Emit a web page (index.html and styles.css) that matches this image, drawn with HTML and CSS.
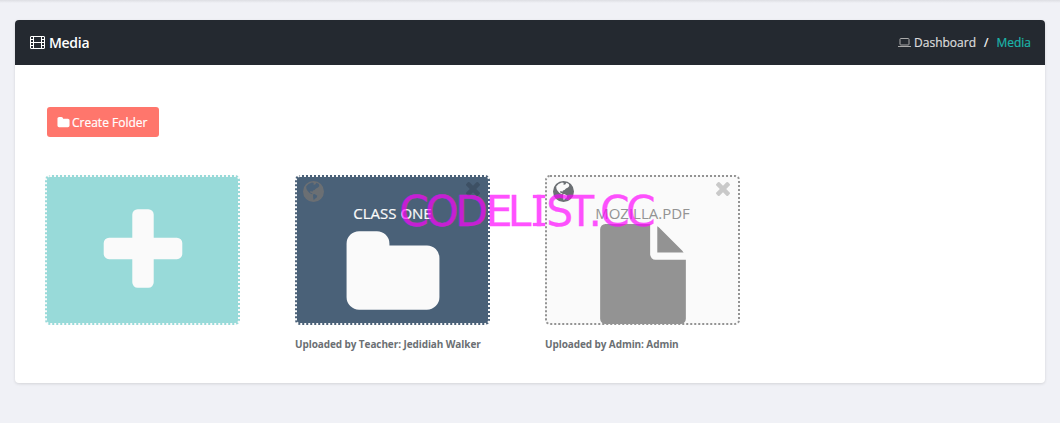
FILE: index.html
```html
<!DOCTYPE html>
<html lang="en">
<head>
<meta charset="utf-8">
<title>Media</title>
<link rel="stylesheet" href="styles.css">
</head>
<body>
<svg class="defs" aria-hidden="true">
  <symbol id="folder" viewBox="0 0 1792 1792"><path d="M1728 608v704q0 92-66 158t-158 66h-1216q-92 0-158-66t-66-158v-960q0-92 66-158t158-66h320q92 0 158 66t66 158v32h672q92 0 158 66t66 158z"/></symbol>
  <symbol id="times" viewBox="302 366 1188 1188"><path d="M1490 1322q0 40-28 68l-136 136q-28 28-68 28t-68-28l-294-294-294 294q-28 28-68 28t-68-28l-136-136q-28-28-28-68t28-68l294-294-294-294q-28-28-28-68t28-68l136-136q28-28 68-28t68 28l294 294 294-294q28-28 68-28t68 28l136 136q28 28 28 68t-28 68l-294 294 294 294q28 28 28 68z"/></symbol>
  <symbol id="globe" viewBox="0 0 21 21"><path fill-rule="evenodd" d="M10.500 0a10.500 10.500 0 1 0 0 21a10.500 10.500 0 1 0 0-21zM3.200 5.500L5.500 3L9 1.500L11 2L10 3.300L12 3.800L13.500 1.800L15.800 3L16.300 5L15 6.500L13 7.500L11.500 9L10 9.500L9.300 10.800L7.800 10L6.800 11L8 12L9.500 12.500L9 13.300L6.500 12L4.500 9.800L3.500 8zM10 13.500L11.500 13L14.300 14.800L13.500 16.800L12 17.800L10.800 19.200L10.200 17z"/></symbol>
</svg>
<div class="topline"></div>
<main class="panel">
  <header class="panel-head">
    <h1 class="title">
      <svg class="film" viewBox="0 0 15 13" fill="none" stroke="currentColor"><rect x=".5" y=".5" width="14" height="12" rx=".5"/><path d="M3.500.5v12M11.500.5v12M3.500 6.500h8M.5 3.500h3M.5 6.500h3M.5 9.500h3M11.500 3.500h3M11.500 6.500h3M11.500 9.500h3"/></svg>
      <span>Media</span>
    </h1>
    <nav class="crumbs">
      <svg class="laptop" viewBox="0 0 13 9" fill="none" stroke="currentColor"><rect x="2" y=".5" width="9" height="6.500" rx=".8"/><path d="M0 8.500h13"/></svg>
      <span class="home">Dashboard</span><span class="slash">/</span><span class="current">Media</span>
    </nav>
  </header>
  <section class="content">
    <button class="create"><svg class="mini"><use href="#folder"/></svg><span>Create Folder</span></button>
    <div class="items">
      <div class="tile add">
        <svg class="big" viewBox="0 0 1792 1792"><path d="M1600 736v192q0 40-28 68t-68 28h-416v416q0 40-28 68t-68 28h-192q-40 0-68-28t-28-68v-416h-416q-40 0-68-28t-28-68v-192q0-40 28-68t68-28h416v-416q0-40 28-68t68-28h192q40 0 68 28t28 68v416h416q40 0 68 28t28 68z"/></svg>
      </div>
      <div class="item">
        <div class="tile class-folder">
          <div class="actions"><svg class="globe"><use href="#globe"/></svg><svg class="close"><use href="#times"/></svg></div>
          <span class="name">CLASS ONE</span>
          <svg class="big"><use href="#folder"/></svg>
        </div>
        <p class="by">Uploaded by Teacher: Jedidiah Walker</p>
      </div>
      <div class="item">
        <div class="tile file">
          <div class="actions"><svg class="globe"><use href="#globe"/></svg><svg class="close"><use href="#times"/></svg></div>
          <span class="name">MOZILLA.PDF</span>
          <svg class="big" viewBox="0 0 1792 1792"><path d="M1152 512v-472q22 14 36 28l408 408q14 14 28 36h-472zm-128 32q0 40 28 68t68 28h544v1056q0 40-28 68t-68 28h-1344q-40 0-68-28t-28-68v-1600q0-40 28-68t68-28h800v544z"/></svg>
        </div>
        <p class="by">Uploaded by Admin: Admin</p>
      </div>
    </div>
  </section>
</main>
<svg class="watermark" viewBox="0 0 260 50">
  <text y="41" x="-.7 25.300 55.300 85.800 107.800 132.700 146.200 168.300 188.600 200 226">CODELIST.CC</text>
  <path d="M133 10h12v3h-12zM133 38h12v3h-12z"/>
</svg>
</body>
</html>
```
FILE: styles.css
```css
* { box-sizing: border-box; }
body {
  margin: 0;
  height: 423px;
  overflow: hidden;
  background: #f0f1f6;
  font-family: "Open Sans", "Noto Sans", sans-serif;
}
.defs { display: none; }
.topline { height: 3px; background: linear-gradient(#dddee3, #f0f1f6); }
.panel {
  margin: 17px 15px 0;
  height: 363px;
  background: #fff;
  border-radius: 4px;
  box-shadow: 0 1px 3px rgba(0, 0, 0, .12);
}
.panel-head {
  height: 45px;
  padding: 0 14px 0 15px;
  display: flex;
  justify-content: space-between;
  align-items: center;
  background: #242930;
  border-radius: 4px 4px 0 0;
  color: #fff;
}
.title {
  margin: 0;
  display: flex;
  align-items: center;
  gap: 4px;
  font-size: 14px;
  font-weight: 600;
  letter-spacing: -.3px;
}
.film { width: 15px; height: 13px; }
.crumbs {
  display: flex;
  align-items: center;
  font-size: 12px;
  color: #dcdcdc;
  -webkit-text-stroke: .2px currentColor;
}
.laptop { width: 13px; height: 9px; margin-right: 3px; color: #aaa; }
.slash { margin: 0 8px; color: #fff; }
.current { color: #1bb5ab; }
.content { padding: 42px 30px 0; }
.create {
  display: flex;
  align-items: center;
  gap: 2px;
  width: 112px;
  height: 30px;
  margin: 0 0 38px 2px;
  padding: 0 10px;
  border: 0;
  border-radius: 3px;
  background: #ff766c;
  color: #fff;
  font: 12px "Open Sans", "Noto Sans", sans-serif;
  -webkit-text-stroke: .2px currentColor;
  white-space: nowrap;
}
.mini { width: 13px; height: 13px; fill: #fff; flex: none; }
.items { display: flex; gap: 55px; }
.tile {
  width: 195px;
  height: 150px;
  border: 2px dotted #fafafa;
  border-radius: 5px;
  display: flex;
  flex-direction: column;
  align-items: center;
  color: #fafafa;
}
.add { background: #98dad9; justify-content: center; }
.class-folder { background: #4a6178; }
.file { background: #fafafa; border-color: #939393; color: #939393; }
.big { width: 100px; height: 100px; fill: currentColor; flex: none; }
.add .big { margin-top: 4px; }
.actions {
  width: 100%;
  height: 24px;
  padding: 4px 8px 0 6px;
  display: flex;
  justify-content: space-between;
}
.globe { width: 21px; height: 21px; fill: #6b6f73; }
.close { width: 14px; height: 14px; margin-top: 1px; fill: #c9c9c9; }
.class-folder .close { fill: #3d5064; }
.name { height: 23px; line-height: 24px; font-size: 15px; }
.class-folder .name { -webkit-text-stroke: .2px currentColor; }
.by {
  margin: 11px 0 0;
  font-size: 10px;
  line-height: 16px;
  font-weight: 700;
  letter-spacing: -.09px;
  color: #6b6f73;
}
.watermark {
  position: absolute;
  left: 400px;
  top: 185px;
  width: 260px;
  height: 50px;
  opacity: .68;
  fill: #f0f;
  stroke: #f0f;
  stroke-width: .3px;
  font-family: "DejaVu Sans", sans-serif;
  font-size: 42.5px;
}
```
